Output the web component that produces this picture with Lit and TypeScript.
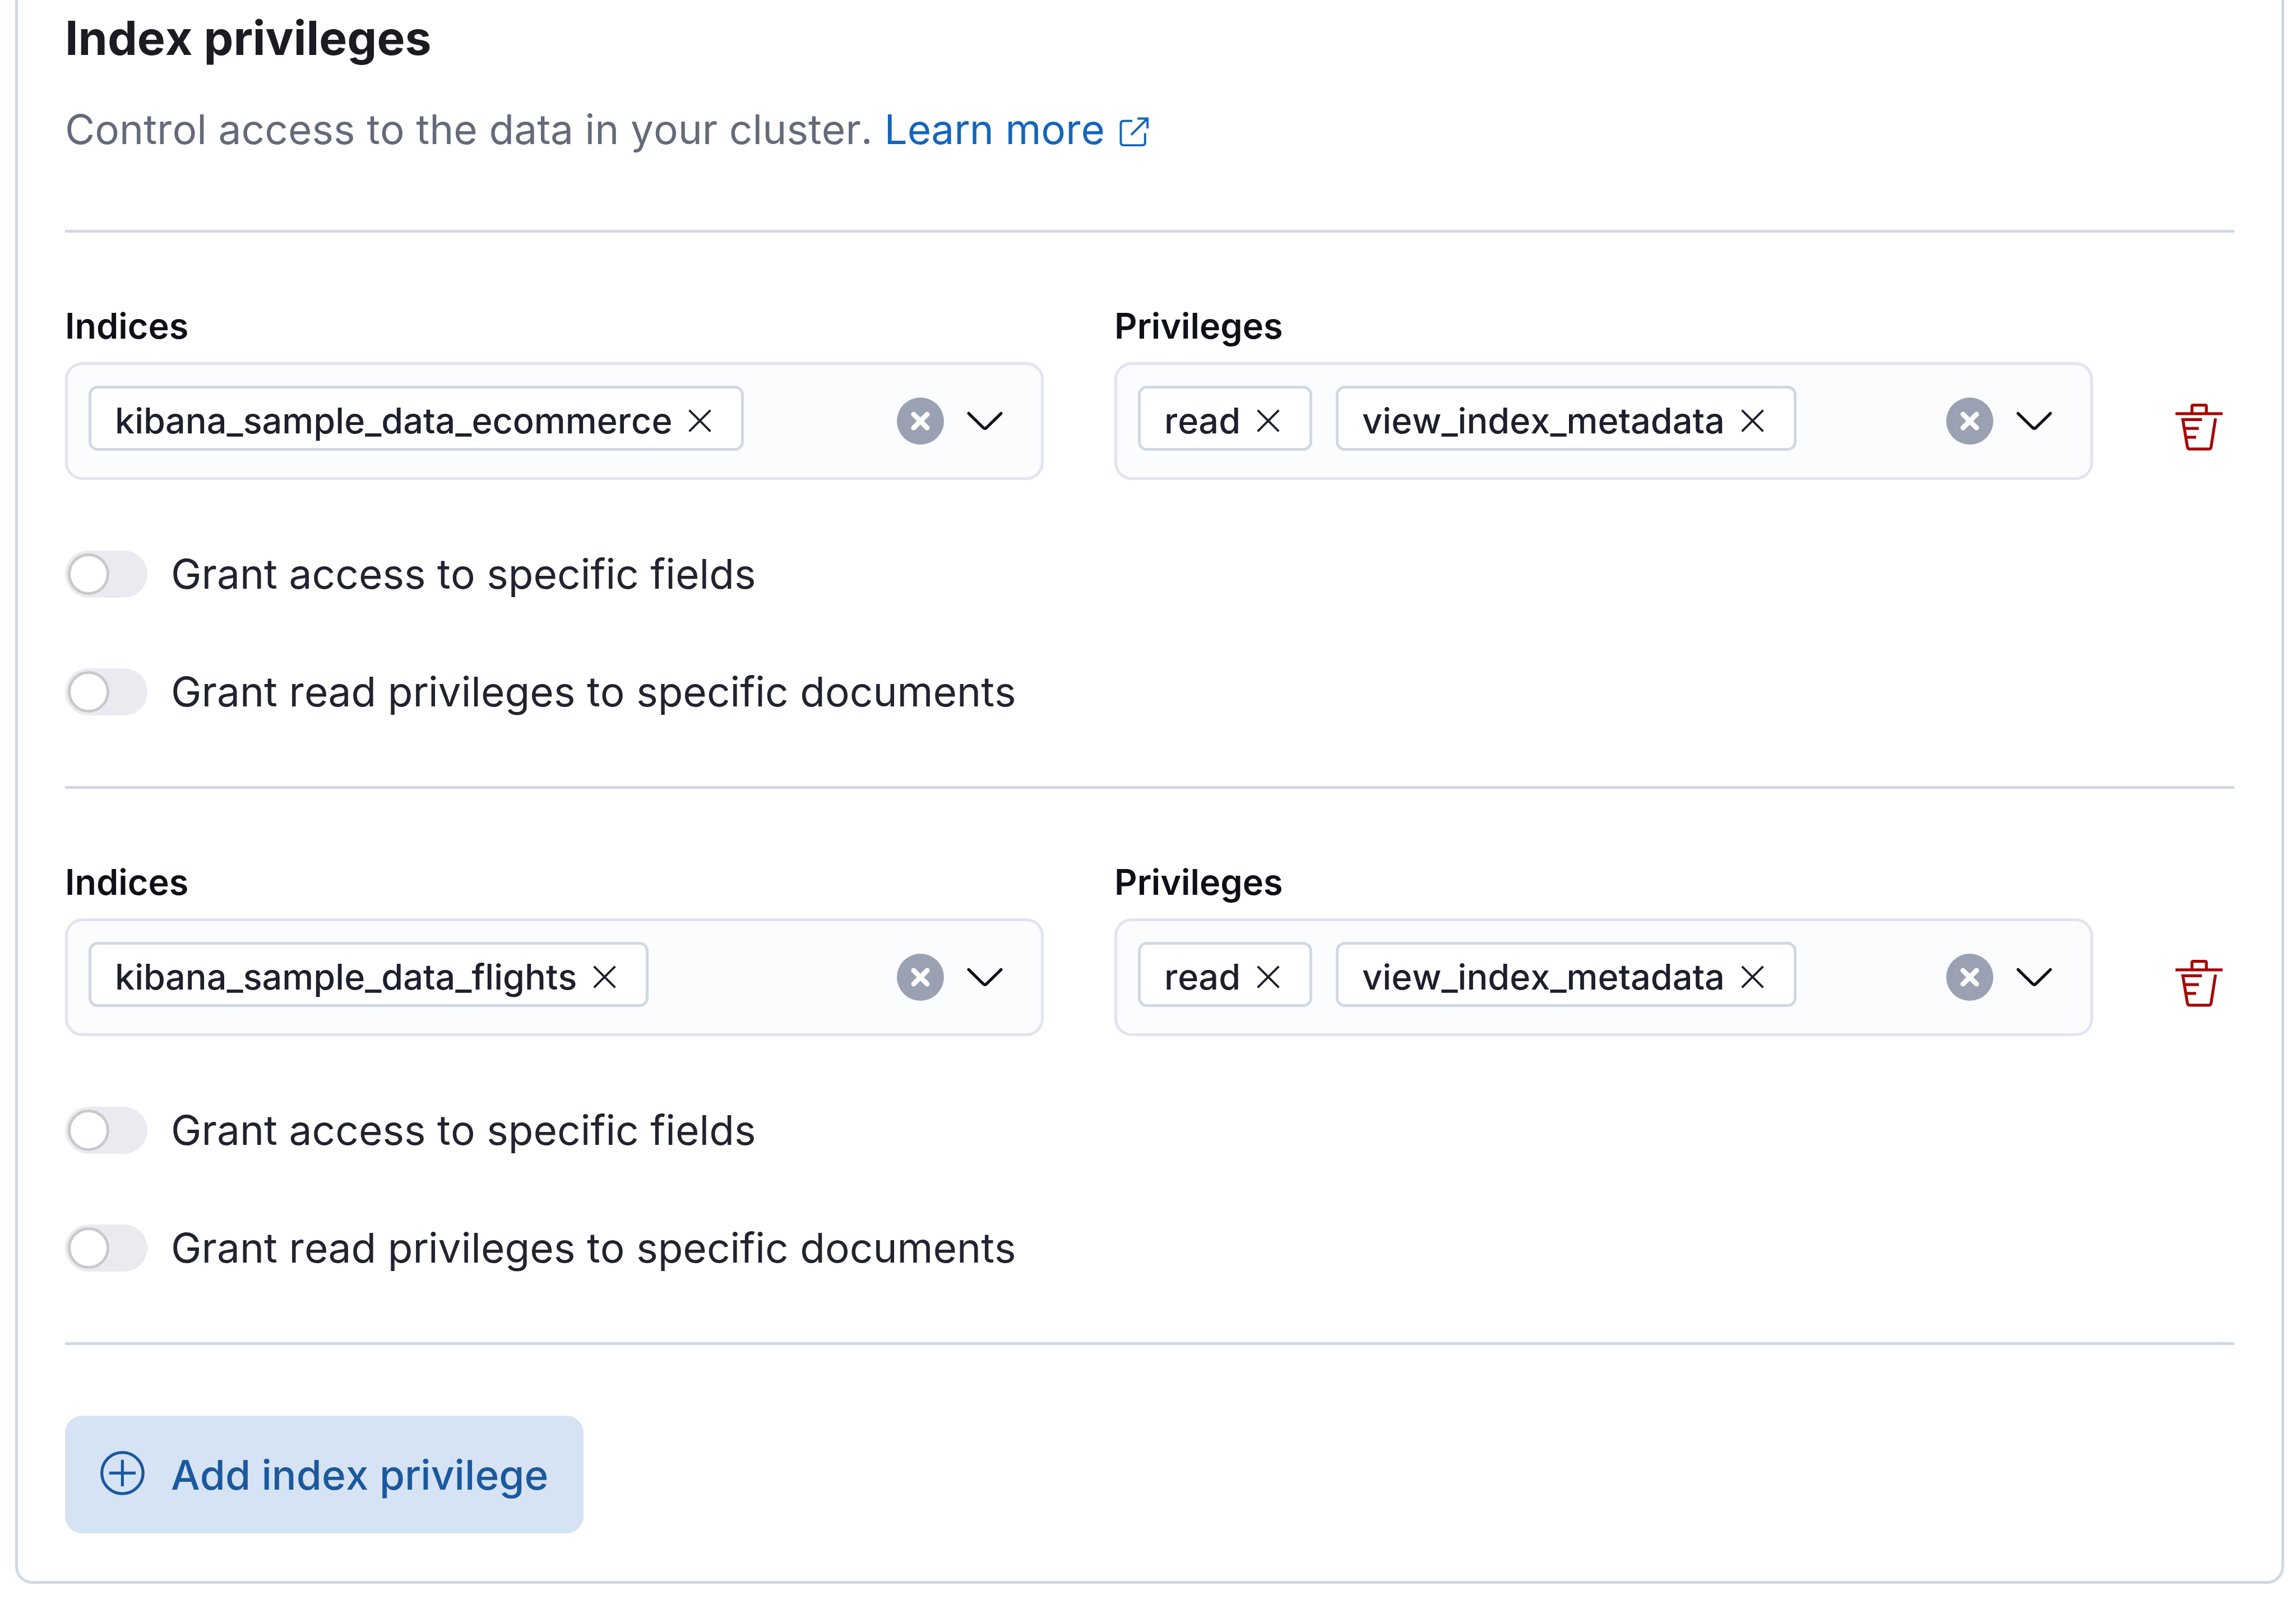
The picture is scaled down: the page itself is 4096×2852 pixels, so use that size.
import { LitElement, html, css } from "lit";
import { customElement, property, state } from "lit/decorators.js";

const crossIcon = html`<svg class="cross" viewBox="0 0 16 16" aria-hidden="true">
  <path d="M3.2 3.2 12.8 12.8M12.8 3.2 3.2 12.8" />
</svg>`;

const clearIcon = html`<svg class="clear" viewBox="0 0 16 16" aria-hidden="true">
  <circle cx="8" cy="8" r="8" />
  <path d="M5.7 5.7 10.3 10.3M10.3 5.7 5.7 10.3" />
</svg>`;

const chevronIcon = html`<svg class="chevron" viewBox="0 0 16 16" aria-hidden="true">
  <path d="M2.5 5.4 7.4 10.2Q8 10.8 8.6 10.2L13.5 5.4" />
</svg>`;

const trashIcon = html`<svg class="trash" viewBox="0 0 16 16" aria-hidden="true">
  <path d="M5.6 3.4V.9Q5.6.5 6 .5H10Q10.5.5 10.5.9V3.4M0 3.4H16" />
  <path d="M9 5.4H2.5L4.05 14.7Q4.2 15.4 4.8 15.4H11.4Q12 15.4 12.1 14.7L13.6 5M3.3 8.4H7.95M3.8 11.4H7" />
</svg>`;

const externalIcon = html`<svg class="external" viewBox="0 0 16 16" aria-hidden="true">
  <path d="M7.1 3.5H3.1Q1.9 3.5 1.9 4.7V13.3Q1.9 14.5 3.1 14.5H11.7Q12.9 14.5 12.9 13.3V9" />
  <path d="M9.4 2.4H14V6.9M14 2.4 6.6 9.8" />
</svg>`;

const plusIcon = html`<svg class="plus" viewBox="0 0 16 16" aria-hidden="true">
  <circle cx="7.5" cy="7.5" r="7" />
  <path d="M7.5 3V12M3 7.5H12" />
</svg>`;

@customElement("combo-box")
class ComboBox extends LitElement {
  @property() label = "";
  @property({ attribute: false }) items: string[] = [];

  static styles = css`
    :host {
      display: block;
      min-width: 0;
    }
    .label {
      display: block;
      margin-bottom: 25px;
      font-size: 63px;
      line-height: 80px;
      font-weight: 600;
      color: #0e1017;
    }
    .box {
      display: flex;
      box-sizing: border-box;
      min-height: 210px;
      padding: 37px 58px 37px 37px;
      border: 5px solid #e2e4f0;
      border-radius: 31px;
      background: #fbfcfe;
    }
    .chips {
      display: flex;
      flex: 1;
      flex-wrap: wrap;
      align-items: flex-start;
      gap: 42px;
      min-width: 0;
    }
    .chip {
      display: flex;
      align-items: center;
      gap: 18px;
      box-sizing: border-box;
      height: 116px;
      padding: 8px 42px 0;
      border: 5px solid #d0d7e5;
      border-radius: 16px;
      background: #fff;
      color: #1d202c;
      font-size: 63px;
      line-height: 80px;
      font-weight: 500;
    }
    .field {
      flex: 1;
      width: 40px;
      min-width: 40px;
      height: 116px;
      padding: 0;
      border: 0;
      outline: 0;
      background: none;
      font: inherit;
      font-size: 63px;
    }
    .actions {
      display: flex;
      align-items: center;
      gap: 31px;
    }
    button {
      display: block;
      padding: 0;
      border: 0;
      background: none;
      color: inherit;
      cursor: pointer;
    }
    svg {
      display: block;
      width: 84px;
      height: 84px;
      fill: none;
      stroke: currentColor;
    }
    .cross {
      width: 63px;
      height: 63px;
    }
    .clear circle {
      fill: #99a1b2;
      stroke: none;
    }
    .clear path {
      stroke: #fff;
      stroke-width: 1.7;
      stroke-linecap: round;
    }
    .chevron {
      color: #0e1017;
    }
    .chevron path {
      stroke-linecap: round;
    }
  `;

  render() {
    return html`
      <label class="label" for="field">${this.label}</label>
      <div class="box">
        <div class="chips">
          ${this.items.map(
            (item) => html`<span class="chip">
              ${item}<button type="button" aria-label="Remove ${item}">${crossIcon}</button>
            </span>`
          )}
          <input class="field" id="field" type="text" role="combobox" aria-expanded="false" />
        </div>
        <div class="actions">
          <button type="button" aria-label="Clear input">${clearIcon}</button>
          <button type="button" aria-label="Open list of options">${chevronIcon}</button>
        </div>
      </div>
    `;
  }
}

@customElement("toggle-switch")
class ToggleSwitch extends LitElement {
  @property() label = "";

  static styles = css`
    :host {
      display: block;
    }
    .row {
      display: inline-flex;
      align-items: center;
      gap: 42px;
      height: 84px;
      vertical-align: top;
      font-size: 73px;
      line-height: 84px;
      color: #21242f;
      cursor: pointer;
    }
    .track {
      appearance: none;
      display: flex;
      align-items: center;
      box-sizing: border-box;
      width: 147px;
      height: 84px;
      margin: 0;
      padding: 5px;
      border-radius: 42px;
      background: #eaebf0;
    }
    .track::before {
      content: "";
      box-sizing: border-box;
      width: 74px;
      height: 74px;
      border: 5px solid #c8c9cb;
      border-radius: 50%;
      background: #fff;
    }
    .track:checked {
      justify-content: flex-end;
      background: #1565bd;
    }
  `;

  render() {
    return html`<label class="row">
      <input class="track" type="checkbox" role="switch" />
      <span>${this.label}</span>
    </label>`;
  }
}

interface IndexPrivilege {
  indices: string[];
  privileges: string[];
}

@customElement("app-root")
class AppRoot extends LitElement {
  @state() entries: IndexPrivilege[] = [
    { indices: ["kibana_sample_data_ecommerce"], privileges: ["read", "view_index_metadata"] },
    { indices: ["kibana_sample_data_flights"], privileges: ["read", "view_index_metadata"] },
  ];

  static styles = css`
    :host {
      display: flow-root;
      background: #fff;
      font-family: Inter, "Liberation Sans", sans-serif;
      font-kerning: none;
    }
    .panel {
      margin: 0 21px 27px 27px;
      padding: 5px 84px 85px;
      border: 5px solid #d0d7e5;
      border-top: 0;
      border-radius: 0 0 31px 31px;
    }
    .title {
      margin: 0 0 37px;
      font-size: 84px;
      line-height: 126px;
      font-weight: 700;
      color: #1a1c22;
    }
    .intro {
      margin: 0 0 116px;
      font-size: 73px;
      line-height: 126px;
      color: #646a79;
    }
    .link {
      color: #1565bd;
      text-decoration: none;
    }
    .rule {
      height: 5px;
      margin: 0;
      border: 0;
      background: #d0d7e5;
    }
    .entry {
      display: grid;
      gap: 126px;
      padding: 126px 0;
    }
    .fields {
      display: grid;
      grid-template-columns: 1fr 1fr 126px;
      gap: 126px;
    }
    .delete {
      align-self: end;
      display: grid;
      place-items: center;
      height: 126px;
      margin-bottom: 31px;
      padding: 0;
      border: 0;
      background: none;
      color: #a70808;
      cursor: pointer;
    }
    svg {
      width: 84px;
      height: 84px;
      fill: none;
      stroke: currentColor;
    }
    .external {
      width: 63px;
      height: 63px;
      margin-left: 21px;
      vertical-align: -8px;
    }
    .add {
      display: flex;
      align-items: center;
      gap: 42px;
      height: 210px;
      margin-top: 126px;
      padding: 0 63px;
      border: 0;
      border-radius: 31px;
      background: #d6e3f4;
      color: #1a599f;
      font: inherit;
      font-kerning: inherit;
      font-size: 73px;
      font-weight: 500;
      cursor: pointer;
    }
  `;

  render() {
    return html`<section class="panel">
      <h2 class="title">Index privileges</h2>
      <p class="intro">
        Control access to the data in your cluster.
        <a class="link" href="#learn-more">Learn more${externalIcon}</a>
      </p>
      <hr class="rule" />
      ${this.entries.map(
        (entry) => html`<div class="entry">
            <div class="fields">
              <combo-box label="Indices" .items=${entry.indices}></combo-box>
              <combo-box label="Privileges" .items=${entry.privileges}></combo-box>
              <button class="delete" type="button" aria-label="Delete index privilege">${trashIcon}</button>
            </div>
            <toggle-switch label="Grant access to specific fields"></toggle-switch>
            <toggle-switch label="Grant read privileges to specific documents"></toggle-switch>
          </div>
          <hr class="rule" />`
      )}
      <button class="add" type="button">${plusIcon}<span>Add index privilege</span></button>
    </section>`;
  }
}
